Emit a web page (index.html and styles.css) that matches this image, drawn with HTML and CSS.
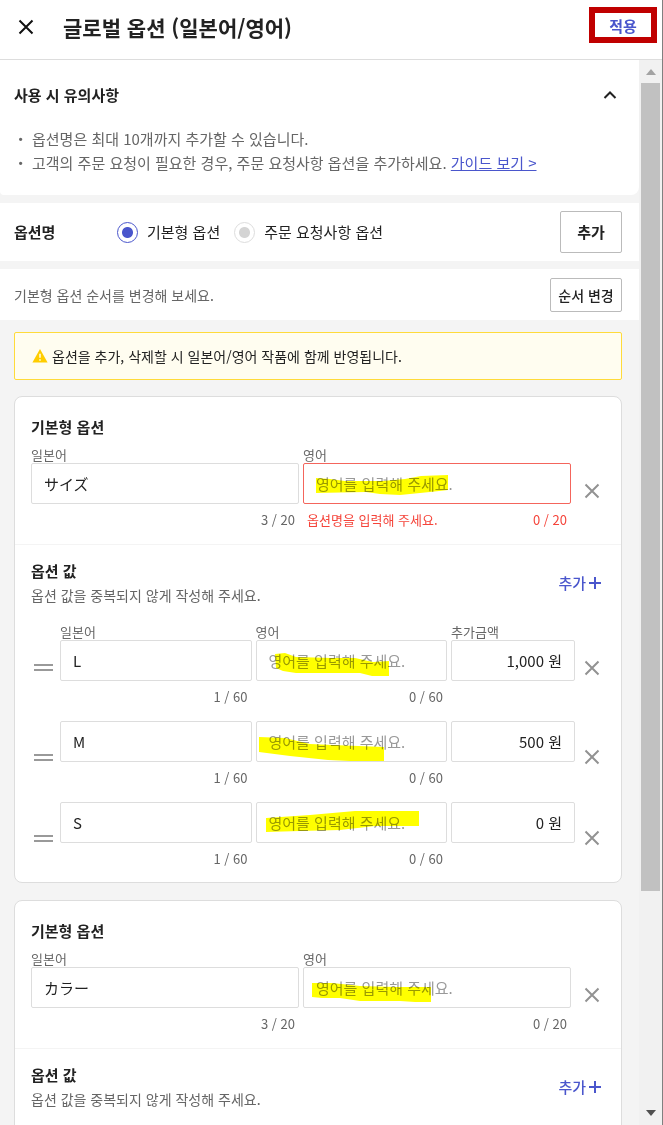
FILE: index.html
```html
<!DOCTYPE html>
<html lang="ko">
<head>
<meta charset="UTF-8">
<meta name="viewport" content="width=device-width, initial-scale=1.0">
<title>글로벌 옵션 (일본어/영어)</title>
<link rel="stylesheet" href="styles.css">
</head>
<body>
<header class="header">
    <button class="icon-btn" type="button" aria-label="닫기">
        <svg width="16" height="16" viewBox="0 0 16 16"><path d="M1.5 1.5l13 13M14.5 1.5l-13 13" stroke="#111" stroke-width="2" fill="none"/></svg>
    </button>
    <h1 class="header-title">글로벌 옵션 (일본어/영어)</h1>
    <button class="apply-btn" type="button">적용</button>
</header>
<div class="body">
    <main class="content">
        <section class="notice">
            <div class="notice-head">
                <h2 class="title">사용 시 유의사항</h2>
                <button class="icon-btn" type="button" aria-label="접기">
                    <svg width="14" height="10" viewBox="0 0 14 10"><path d="M1.5 8L7 2.5 12.5 8" stroke="#222" stroke-width="2" fill="none"/></svg>
                </button>
            </div>
            <ul class="notice-list">
                <li>옵션명은 최대 10개까지 추가할 수 있습니다.</li>
                <li>고객의 주문 요청이 필요한 경우, 주문 요청사항 옵션을 추가하세요. <a href="#">가이드 보기 &gt;</a></li>
            </ul>
        </section>

        <section class="bar bar-type">
            <h2 class="title bar-title">옵션명</h2>
            <label class="radio"><input type="radio" name="type" checked>기본형 옵션</label>
            <label class="radio"><input type="radio" name="type">주문 요청사항 옵션</label>
            <button class="btn btn-add" type="button">추가</button>
        </section>

        <section class="bar bar-order">
            <p class="desc">기본형 옵션 순서를 변경해 보세요.</p>
            <button class="btn btn-order" type="button">순서 변경</button>
        </section>

        <div class="alert">
            <svg width="16" height="14" viewBox="0 0 16 14"><path d="M8 0l7.6 13.4H.4z" fill="#ffcd00"/><path d="M8 4.8v4M8 10.2v1.6" stroke="#fffdf0" stroke-width="1.5"/></svg>
            <p>옵션을 추가, 삭제할 시 일본어/영어 작품에 함께 반영됩니다.</p>
        </div>

        <section class="card">
            <div class="card-name">
                <h2 class="title">기본형 옵션</h2>
                <div class="name-row">
                    <div class="field">
                        <label for="name1-ja">일본어</label>
                        <input type="text" id="name1-ja" value="サイズ">
                        <div class="help"><span class="count">3 / 20</span></div>
                    </div>
                    <div class="field error">
                        <label for="name1-en">영어</label>
                        <div class="marked">
                            <input type="text" id="name1-en" placeholder="영어를 입력해 주세요.">
                            <svg class="mark" width="180" height="42"><path d="M13 15L27 16 42 18 80 18 102 16 118 13 145 12V27L127 29 107 31 97 32 77 31 63 29 13 30z"/></svg>
                        </div>
                        <div class="help"><span>옵션명을 입력해 주세요.</span><span class="count">0 / 20</span></div>
                    </div>
                    <button class="remove" type="button" aria-label="삭제"><svg width="16" height="16" viewBox="0 0 16 16"><path d="M1.5 1.5l13 13M14.5 1.5l-13 13"/></svg></button>
                </div>
            </div>
            <div class="card-values">
                <div class="values-head">
                    <div>
                        <h2 class="title">옵션 값</h2>
                        <p class="desc">옵션 값을 중복되지 않게 작성해 주세요.</p>
                    </div>
                    <button class="add-link" type="button">추가<svg width="12" height="12" viewBox="0 0 12 12"><path d="M6 0v12M0 6h12" stroke="#4a56cc" stroke-width="2"/></svg></button>
                </div>
                <div class="values">
                    <div class="value-row">
                        <span class="handle"></span>
                        <div class="field">
                            <label for="v1-ja">일본어</label>
                            <input type="text" id="v1-ja" value="L">
                            <div class="help"><span class="count">1 / 60</span></div>
                        </div>
                        <div class="field">
                            <label for="v1-en">영어</label>
                            <div class="marked">
                                <input type="text" id="v1-en" placeholder="영어를 입력해 주세요.">
                                <svg class="mark" width="180" height="42"><path d="M19 14L29 13 40 17 76 18 99 18 117 22 133 21V36H116L104 33 40 33 27 31 20 28z"/></svg>
                            </div>
                            <div class="help"><span class="count">0 / 60</span></div>
                        </div>
                        <div class="field price">
                            <label for="v1-price">추가금액</label>
                            <input type="text" id="v1-price" value="1,000 원">
                            <div class="help"></div>
                        </div>
                        <button class="remove" type="button" aria-label="삭제"><svg width="16" height="16" viewBox="0 0 16 16"><path d="M1.5 1.5l13 13M14.5 1.5l-13 13"/></svg></button>
                    </div>
                    <div class="value-row">
                        <span class="handle"></span>
                        <div class="field">
                            <input type="text" aria-label="일본어" value="M">
                            <div class="help"><span class="count">1 / 60</span></div>
                        </div>
                        <div class="field">
                            <div class="marked">
                                <input type="text" aria-label="영어" placeholder="영어를 입력해 주세요.">
                                <svg class="mark" width="180" height="42"><path d="M3 16L29 17 54 23 77 24 128 26V40H94L72 39 34 35 3 31z"/></svg>
                            </div>
                            <div class="help"><span class="count">0 / 60</span></div>
                        </div>
                        <div class="field price">
                            <input type="text" aria-label="추가금액" value="500 원">
                            <div class="help"></div>
                        </div>
                        <button class="remove" type="button" aria-label="삭제"><svg width="16" height="16" viewBox="0 0 16 16"><path d="M1.5 1.5l13 13M14.5 1.5l-13 13"/></svg></button>
                    </div>
                    <div class="value-row">
                        <span class="handle"></span>
                        <div class="field">
                            <input type="text" aria-label="일본어" value="S">
                            <div class="help"><span class="count">1 / 60</span></div>
                        </div>
                        <div class="field">
                            <div class="marked">
                                <input type="text" aria-label="영어" placeholder="영어를 입력해 주세요.">
                                <svg class="mark" width="180" height="42"><path d="M10 16L54 13 99 9H163V24H119L84 28 44 29 10 30z"/></svg>
                            </div>
                            <div class="help"><span class="count">0 / 60</span></div>
                        </div>
                        <div class="field price">
                            <input type="text" aria-label="추가금액" value="0 원">
                            <div class="help"></div>
                        </div>
                        <button class="remove" type="button" aria-label="삭제"><svg width="16" height="16" viewBox="0 0 16 16"><path d="M1.5 1.5l13 13M14.5 1.5l-13 13"/></svg></button>
                    </div>
                </div>
            </div>
        </section>

        <section class="card card-open">
            <div class="card-name">
                <h2 class="title">기본형 옵션</h2>
                <div class="name-row">
                    <div class="field">
                        <label for="name2-ja">일본어</label>
                        <input type="text" id="name2-ja" value="カラー">
                        <div class="help"><span class="count">3 / 20</span></div>
                    </div>
                    <div class="field">
                        <label for="name2-en">영어</label>
                        <div class="marked">
                            <input type="text" id="name2-en" placeholder="영어를 입력해 주세요.">
                            <svg class="mark" width="180" height="42"><path d="M9 16H29L57 19 92 20H128V35H112L97 34H57L37 31H19L9 30z"/></svg>
                        </div>
                        <div class="help"><span class="count">0 / 20</span></div>
                    </div>
                    <button class="remove" type="button" aria-label="삭제"><svg width="16" height="16" viewBox="0 0 16 16"><path d="M1.5 1.5l13 13M14.5 1.5l-13 13"/></svg></button>
                </div>
            </div>
            <div class="card-values">
                <div class="values-head">
                    <div>
                        <h2 class="title">옵션 값</h2>
                        <p class="desc">옵션 값을 중복되지 않게 작성해 주세요.</p>
                    </div>
                    <button class="add-link" type="button">추가<svg width="12" height="12" viewBox="0 0 12 12"><path d="M6 0v12M0 6h12" stroke="#4a56cc" stroke-width="2"/></svg></button>
                </div>
            </div>
        </section>
    </main>
    <div class="scrollbar">
        <svg width="10" height="6" viewBox="0 0 10 6"><path d="M0 6l5-6 5 6z" fill="#a3a3a3"/></svg>
        <div class="thumb"></div>
        <div class="track"></div>
        <svg width="10" height="6" viewBox="0 0 10 6"><path d="M0 0l5 6 5-6z" fill="#505050"/></svg>
    </div>
</div>
</body>
</html>
```
FILE: styles.css
```css
*, *::before {
    box-sizing: border-box;
}
body {
    display: flex;
    flex-direction: column;
    height: 100vh;
    margin: 0;
    border-right: 1px solid #808080;
    overflow: hidden;
    background: #fff;
    color: #222;
    font-family: "Noto Sans CJK KR", "Noto Sans", sans-serif;
    font-size: 15px;
    line-height: 24px;
}
h1, h2, p, ul {
    margin: 0;
    padding: 0;
}
button, input {
    font: inherit;
    color: inherit;
}
button {
    padding: 0;
    border: 0;
    background: none;
    cursor: pointer;
}
svg {
    display: block;
    flex: none;
}

/* header */
.header {
    display: flex;
    flex: none;
    align-items: center;
    height: 60px;
    padding: 0 5px 5px 18px;
    border-bottom: 1px solid #ddd;
}
.header-title {
    flex: 1;
    margin-left: 29px;
    font-size: 21px;
    font-weight: 700;
    line-height: 32px;
}
.apply-btn {
    width: 68px;
    height: 36px;
    margin-bottom: 4px;
    padding-top: 2px;
    border: 6px solid #c00000;
    color: #4a56cc;
    font-weight: 700;
    line-height: 22px;
}

/* layout */
.body {
    display: flex;
    flex: 1;
    min-height: 0;
}
.content {
    flex: 1;
    min-width: 0;
    overflow: hidden;
    background: #f4f4f4;
}
.scrollbar {
    display: flex;
    flex-direction: column;
    align-items: center;
    width: 23px;
    padding: 9px 2px;
    background: #f1f1f1;
}
.thumb {
    flex: 81;
    align-self: stretch;
    margin-top: 8px;
    background: #c1c1c1;
}
.track {
    flex: 22;
}
.title {
    font-size: 15px;
    font-weight: 700;
    line-height: 24px;
}
.desc {
    color: #666;
    font-size: 14px;
    line-height: 24px;
}

/* notice */
.notice {
    padding: 23px 16px 20px 14px;
    border-radius: 0 0 8px 4px;
    background: #fff;
}
.notice-head {
    display: flex;
    align-items: center;
    justify-content: space-between;
    padding-right: 6px;
}
.notice-list {
    margin-top: 20px;
    color: #666;
    list-style: none;
}
.notice-list li {
    display: flex;
    white-space: pre-wrap;
}
.notice-list li::before {
    content: "·";
    width: 18px;
    padding-left: 4px;
    font-weight: 900;
}
a {
    color: #4a56cc;
}

/* option bars */
.bar {
    display: flex;
    align-items: center;
    margin-top: 8px;
    padding: 8px 17px 8px 14px;
    background: #fff;
}
.bar-order {
    padding-top: 9px;
}
.bar-title {
    width: 103px;
}
.radio {
    display: flex;
    align-items: center;
    margin-right: 14px;
}
.radio input {
    appearance: none;
    width: 21px;
    height: 21px;
    margin: 0 9px 0 0;
    border: 1px solid #ddd;
    border-radius: 50%;
    background: radial-gradient(circle, #d4d4d4 5px, #fff 6px);
}
.radio input:checked {
    border-color: #4a56cc;
    background: radial-gradient(circle, #4a56cc 5px, #fff 6px);
}
.btn {
    margin-left: auto;
    border: 1px solid #bbb;
    border-radius: 2px;
    background: #fff;
}
.btn-add {
    width: 62px;
    height: 42px;
    font-weight: 700;
}
.btn-order {
    width: 72px;
    height: 34px;
    font-size: 14px;
    font-weight: 500;
}

.alert {
    display: flex;
    align-items: center;
    gap: 4px;
    margin: 12px 17px 16px 14px;
    padding: 11px 17px;
    border: 1px solid #ffdb3a;
    border-radius: 2px;
    background: #fffdf0;
    font-size: 14px;
}

/* option card */
.card {
    margin: 0 17px 17px 14px;
    border: 1px solid #ddd;
    border-radius: 8px;
    background: #fff;
}
.card-open {
    padding-bottom: 40px;
}
.card-name {
    padding: 18px 16px 9px;
    border-bottom: 1px solid #f4f4f4;
}
.card-values {
    padding: 14px 16px 8px;
}
.name-row {
    display: grid;
    grid-template-columns: 1fr 1fr 30px;
    gap: 4px;
    align-items: center;
    margin-top: 7px;
}
.values-head {
    display: flex;
    align-items: center;
    justify-content: space-between;
    padding-right: 4px;
}
.add-link {
    display: flex;
    align-items: center;
    gap: 3px;
    color: #4a56cc;
    font-weight: 500;
}
.values {
    display: grid;
    gap: 9px;
    margin-top: 16px;
}
.value-row {
    display: grid;
    grid-template-columns: 25px 1fr 1fr 124px 26px;
    gap: 4px;
    align-items: center;
}
.handle {
    width: 19px;
    height: 7px;
    margin-left: 3px;
    border: solid #999;
    border-width: 2px 0;
}
.field label {
    display: block;
    color: #666;
    font-size: 13px;
    line-height: 17px;
}
.field input {
    display: block;
    width: 100%;
    height: 41px;
    padding: 0 12px;
    border: 1px solid #ddd;
    border-radius: 2px;
    background: #fff;
}
.field input::placeholder {
    color: #999;
    opacity: 1;
}
.price input {
    text-align: right;
}
.help {
    display: flex;
    height: 31px;
    padding: 0 4px;
    color: #666;
    font-size: 13px;
    line-height: 31px;
}
.count {
    margin-left: auto;
}
.error input {
    border-color: #f4655c;
}
.error .help {
    color: #f5443a;
}
.remove {
    display: flex;
    justify-content: flex-end;
    padding-right: 5px;
}
.remove path {
    stroke: #929292;
    stroke-width: 2;
    fill: none;
}

/* highlighter strokes over the empty fields */
.marked {
    position: relative;
}
.mark {
    position: absolute;
    top: 0;
    left: 0;
    fill: #ff0;
    mix-blend-mode: multiply;
    pointer-events: none;
}
```
